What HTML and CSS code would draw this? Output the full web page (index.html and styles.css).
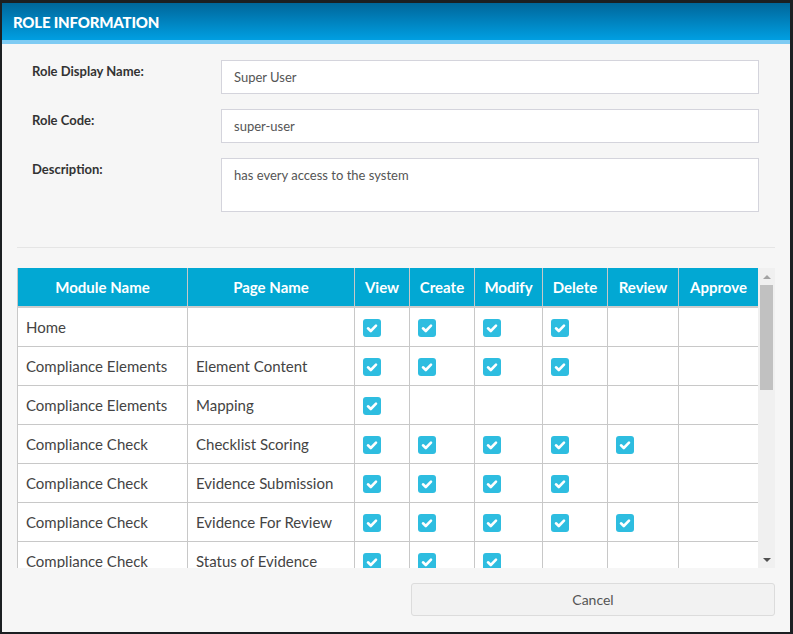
FILE: index.html
```html
<!DOCTYPE html>
<html>
<head>
<meta charset="utf-8">
<link rel="stylesheet" href="styles.css">
</head>
<body>
<div class="modal">
  <div class="modal-header">
    <h1 class="modal-title">ROLE INFORMATION</h1>
  </div>
  <div class="modal-body">
    <div class="form">
      <div class="form-row">
        <label class="form-label">Role Display Name:</label>
        <div class="form-input">Super User</div>
      </div>
      <div class="form-row">
        <label class="form-label">Role Code:</label>
        <div class="form-input">super-user</div>
      </div>
      <div class="form-row">
        <label class="form-label">Description:</label>
        <div class="form-input form-textarea">has every access to the system</div>
      </div>
    </div>
    <hr class="divider">
    <div class="table-wrap">
      <div class="table-viewport">
        <table class="perm-table">
          <colgroup>
            <col class="c-module"><col class="c-page"><col class="c-view"><col class="c-create"><col class="c-modify"><col class="c-delete"><col class="c-review"><col class="c-approve">
          </colgroup>
          <thead>
            <tr><th>Module Name</th><th>Page Name</th><th>View</th><th>Create</th><th>Modify</th><th>Delete</th><th>Review</th><th>Approve</th></tr>
          </thead>
          <tbody id="rows"></tbody>
        </table>
      </div>
      <div class="scrollbar">
        <div class="sb-btn"><span class="arrow-up"></span></div>
        <div class="sb-track"><div class="sb-thumb"></div></div>
        <div class="sb-btn"><span class="arrow-down"></span></div>
      </div>
    </div>
    <div class="footer">
      <button class="btn-cancel">Cancel</button>
    </div>
  </div>
</div>
<script src="app.js"></script>
</body>
</html>
```
FILE: app.js
```js
var data = [
  ["Home", "", [1,1,1,1,0,0]],
  ["Compliance Elements", "Element Content", [1,1,1,1,0,0]],
  ["Compliance Elements", "Mapping", [1,0,0,0,0,0]],
  ["Compliance Check", "Checklist Scoring", [1,1,1,1,1,0]],
  ["Compliance Check", "Evidence Submission", [1,1,1,1,0,0]],
  ["Compliance Check", "Evidence For Review", [1,1,1,1,1,0]],
  ["Compliance Check", "Status of Evidence", [1,1,1,0,0,0]],
  ["Compliance Check", "Approval", [1,1,1,1,1,1]]
];
var check = '<span class="cb"><svg width="18" height="18" viewBox="0 0 18 18"><path d="M5 9.3 L7.8 12 L13 6.6" fill="none" stroke="#fff" stroke-width="2.6" stroke-linecap="round" stroke-linejoin="round"/></svg></span>';
var html = "";
data.forEach(function (r) {
  html += "<tr><td>" + r[0] + "</td><td>" + r[1] + "</td>";
  r[2].forEach(function (v) { html += "<td>" + (v ? check : "") + "</td>"; });
  html += "</tr>";
});
document.getElementById("rows").innerHTML = html;
```
FILE: styles.css
```css
html, body {
  margin: 0;
  padding: 0;
}
body {
  background: #1c1f22;
  font-family: "Lato", "Noto Sans", sans-serif;
  width: 793px;
  height: 634px;
  overflow: hidden;
}
.modal {
  margin: 3px 0 0 2px;
  width: 788px;
  height: 629px;
  background: #f6f6f6;
  display: flex;
  flex-direction: column;
}
.modal-header {
  height: 37px;
  background: linear-gradient(to bottom, #00669a, #009fe2);
  border-bottom: 4px solid #7ecbf3;
  display: flex;
  align-items: center;
  padding-left: 11px;
}
.modal-title {
  margin: 0;
  color: #fff;
  font-size: 15px;
  font-weight: 900;
  letter-spacing: -0.2px;
}
.modal-body {
  padding: 16px 15px 16px 15px;
  display: flex;
  flex-direction: column;
  flex: 1;
}
.form {
  padding: 0 16px 0 15px;
  display: flex;
  flex-direction: column;
  gap: 15px;
}
.form-row {
  display: flex;
}
.form-label {
  width: 189px;
  flex: none;
  font-size: 13px;
  font-weight: 700;
  color: #333;
  padding-top: 3px;
}
.form-input {
  flex: 1;
  height: 32px;
  box-sizing: content-box;
  background: #fff;
  border: 1px solid #d4d4dc;
  font-size: 13px;
  color: #555;
  padding: 0 12px;
  line-height: 32px;
}
.form-textarea {
  line-height: 18px;
  padding-top: 7px;
  height: 45px;
}
.divider {
  border: 0;
  border-top: 1px solid #e5e5e5;
  margin: 35px 0 20px 0;
}
.table-wrap {
  height: 300px;
  display: flex;
}
.table-viewport {
  flex: 1;
  overflow: hidden;
}
.scrollbar {
  width: 17px;
  flex: none;
  background: #f0f0f0;
  display: flex;
  flex-direction: column;
}
.sb-btn {
  height: 17px;
  display: flex;
  align-items: center;
  justify-content: center;
}
.arrow-up {
  width: 0;
  height: 0;
  border-left: 4px solid transparent;
  border-right: 4px solid transparent;
  border-bottom: 4px solid #a3a3a3;
}
.arrow-down {
  width: 0;
  height: 0;
  border-left: 4px solid transparent;
  border-right: 4px solid transparent;
  border-top: 4px solid #505050;
}
.sb-track {
  flex: 1;
  padding: 0 2px;
}
.sb-thumb {
  height: 105px;
  background: #c1c1c1;
}
.perm-table {
  width: 741px;
  border-collapse: collapse;
  table-layout: fixed;
  background: #fff;
}
.c-module { width: 170px; }
.c-page { width: 167px; }
.c-view { width: 55px; }
.c-create { width: 65px; }
.c-modify { width: 68px; }
.c-delete { width: 65px; }
.c-review { width: 71px; }
.c-approve { width: 80px; }
.perm-table th {
  background: #02a8d3;
  color: #fff;
  font-size: 15px;
  font-weight: 700;
  height: 38px;
  padding: 0;
  border-left: 1px solid #c8c8c8;
  border-right: 1px solid #c8c8c8;
  border-bottom: 2px solid #cdcdcd;
  text-align: center;
}
.perm-table td {
  height: 38px;
  padding: 0 8px;
  border: 1px solid #c8c8c8;
  font-size: 15px;
  color: #444;
  white-space: nowrap;
  vertical-align: middle;
}
.cb {
  display: block;
  width: 18px;
  height: 18px;
  background: #2ebde0;
  border-radius: 3px;
  margin-top: 1px;
}
.cb svg {
  display: block;
}
.footer {
  display: flex;
  justify-content: flex-end;
  margin-top: 15px;
}
.btn-cancel {
  width: 364px;
  height: 33px;
  background: #f2f2f2;
  border: 1px solid #dcdcdc;
  border-radius: 3px;
  font-family: "Lato", "Noto Sans", sans-serif;
  font-size: 14px;
  color: #555;
}
```
